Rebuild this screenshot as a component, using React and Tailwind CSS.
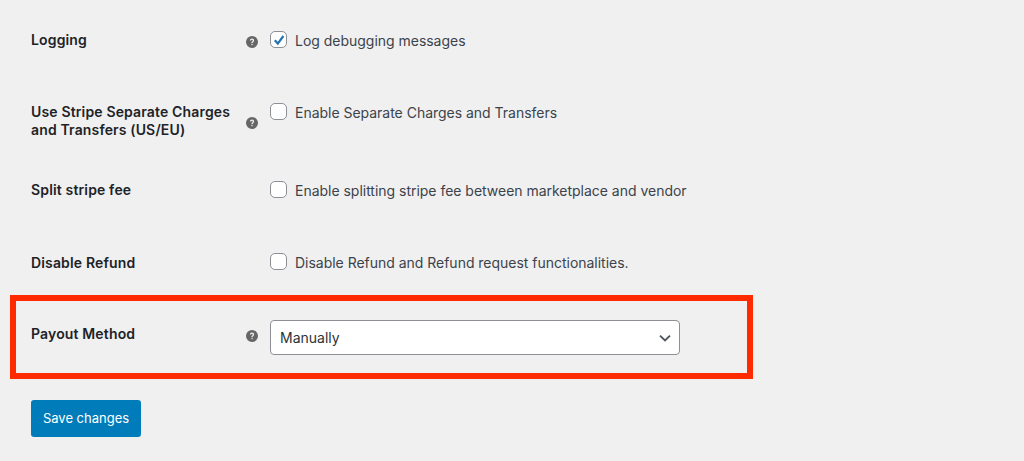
const Help = () => (
  <svg width="12" height="12" viewBox="0 0 12 12" className="block">
    <circle cx="6" cy="6" r="6" fill="#666" />
    <path d="M3.9 4.6c0-1.2.9-2 2.1-2s2.1.8 2.1 1.8c0 1.4-1.5 1.4-1.5 2.7H5.4c0-1.8 1.4-1.7 1.4-2.6 0-.4-.3-.8-.8-.8s-.8.4-.8.9H3.9z" fill="#f0f0f1" />
    <rect x="5.4" y="7.8" width="1.2" height="1.3" fill="#f0f0f1" />
  </svg>
);

const Check = ({ checked }) => (
  <span className="flex h-[17px] w-[17px] shrink-0 items-center justify-center rounded-[5px] border border-[#8c8f94] bg-white">
    {checked && (
      <svg width="14" height="14" viewBox="0 0 14 14" className="block">
        <path d="M2.8 7.2 5.8 10.6 11.4 3" fill="none" stroke="#2271b1" strokeWidth="2.2" />
      </svg>
    )}
  </span>
);

const Row = ({ label, help, h, iconClass = "", children }) => (
  <div className={`flex ${h}`}>
    <div className="w-[215px] shrink-0 text-sm leading-[18px] font-semibold tracking-[0.15px] text-[#1d2327]">{label}</div>
    <div className={`w-[24px] shrink-0 ${iconClass}`}>{help && <Help />}</div>
    {children}
  </div>
);

const CheckField = ({ checked, children }) => (
  <label className="flex h-[17px] items-center gap-2 text-sm tracking-[-0.02px] text-[#3c434a]">
    <Check checked={checked} />
    <span className="whitespace-nowrap pt-[2px]">{children}</span>
  </label>
);

export default function App() {
  return (
    <div className="h-[461px] w-[1024px] overflow-hidden bg-[#f0f0f1] pt-[31px] font-['Inter','Liberation_Sans',sans-serif]">
      <div className="pl-[31px]">
        <Row label="Logging" help h="h-[72px]" iconClass="pt-[5px]">
          <CheckField checked>Log debugging messages</CheckField>
        </Row>
        <Row label={<>Use Stripe Separate Charges<br />and Transfers (US/EU)</>} help h="h-[78px]" iconClass="pt-[14px]">
          <CheckField>Enable Separate Charges and Transfers</CheckField>
        </Row>
        <Row label="Split stripe fee" h="h-[72px]">
          <CheckField>Enable splitting stripe fee between marketplace and vendor</CheckField>
        </Row>
        <Row label={<span className="block pt-px">Disable Refund</span>} h="h-[42px]">
          <CheckField>Disable Refund and Refund request functionalities.</CheckField>
        </Row>
      </div>
      <div className="ml-[10px] h-[84px] w-[743px] border-[6px] border-[#ff2a00] pl-[15px] pt-[19px]">
        <div className="flex">
          <div className="w-[215px] shrink-0 pt-[5px] text-sm leading-[18px] font-semibold tracking-[0.15px] text-[#1d2327]">Payout Method</div>
          <div className="w-[24px] shrink-0 pt-[10px]"><Help /></div>
          <div className="flex h-[35px] w-[410px] items-center justify-between rounded-[4px] border border-[#8c8f94] bg-white pl-[9px] pr-[7px] text-sm text-[#2c3338]">
            <span>Manually</span>
            <svg width="14" height="14" viewBox="0 0 14 14" className="block">
              <path d="M2 4.6 7 9.4 12 4.6" fill="none" stroke="#50575e" strokeWidth="2" />
            </svg>
          </div>
        </div>
      </div>
      <div className="pl-[31px] pt-[21px]">
        <button className="h-[37px] w-[110px] rounded-[3px] bg-[#007cba] text-[13px] text-white">Save changes</button>
      </div>
    </div>
  );
}
